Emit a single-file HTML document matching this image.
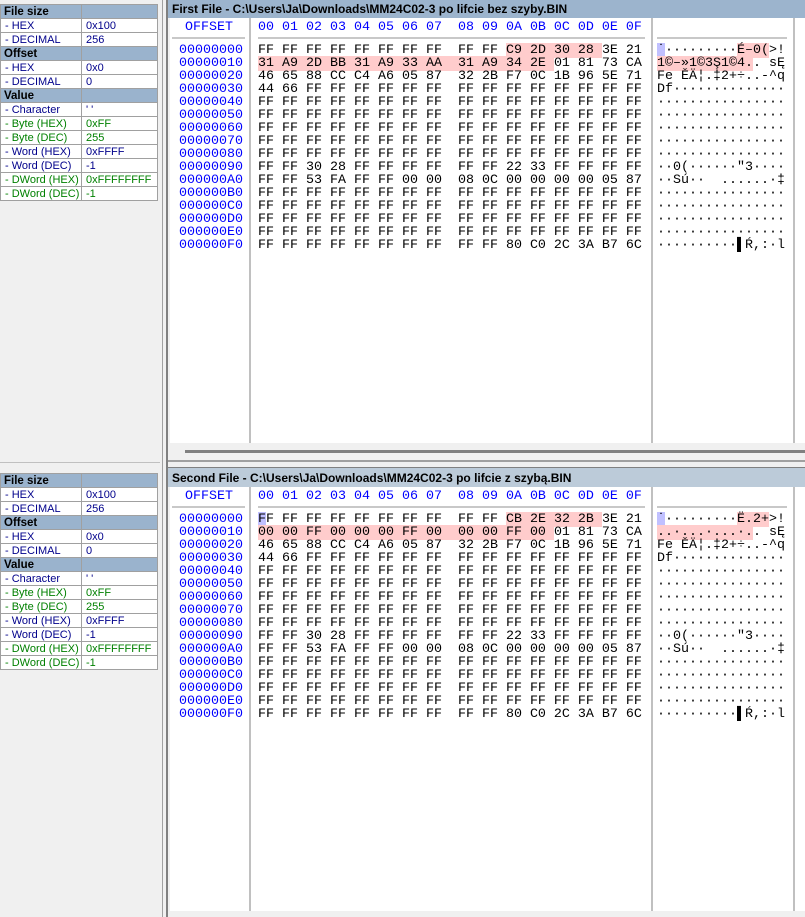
<!DOCTYPE html>
<html><head><meta charset="utf-8">
<style>
*{margin:0;padding:0;box-sizing:border-box}
body{width:805px;height:917px;background:#f0f0f0;position:relative;overflow:hidden;font-family:"Liberation Sans",sans-serif}
.abs{position:absolute}
table.p{position:absolute;left:0;width:158px;border-collapse:collapse;font-size:11px;background:#fff}
table.p td{height:14px;border:1px solid #a0a0a0;padding:0 0 0 4px;line-height:12px;white-space:nowrap}
table.p td:first-child{width:81px}
table.p tr.h td{background:#9ab3cd;font-weight:bold;color:#000;font-size:11.5px;padding-left:3px}
.n{color:#00008b}.g{color:#008000}
.title{position:absolute;left:168px;width:637px;height:18px;font-weight:bold;font-size:12px;line-height:18px;padding-left:4px;color:#000}
.view{position:absolute;left:170px;width:635px;background:#fff}
.mono{font-family:"Liberation Mono",monospace;font-size:13.33px;white-space:pre;line-height:13px;position:absolute}
.off{color:#0000ff;left:9px}
.hx{left:88px;color:#000}
.as{left:487px;color:#000}
.hd{color:#0000ff}
.pk{background:#ffcccc}
.bl{background:#c0c0ff}
.vl{position:absolute;width:2px;background:#c0c0c0}
.hl{position:absolute;height:2px;background:#c8c8c8}
</style></head><body>

<table class="p" style="top:4px">
<tr class="h"><td>File size</td><td></td></tr>
<tr><td class="n">- HEX</td><td class="n">0x100</td></tr>
<tr><td class="n">- DECIMAL</td><td class="n">256</td></tr>
<tr class="h"><td>Offset</td><td></td></tr>
<tr><td class="n">- HEX</td><td class="n">0x0</td></tr>
<tr><td class="n">- DECIMAL</td><td class="n">0</td></tr>
<tr class="h"><td>Value</td><td></td></tr>
<tr><td class="n">- Character</td><td class="n">' '</td></tr>
<tr><td class="g">- Byte (HEX)</td><td class="g">0xFF</td></tr>
<tr><td class="g">- Byte (DEC)</td><td class="g">255</td></tr>
<tr><td class="n">- Word (HEX)</td><td class="n">0xFFFF</td></tr>
<tr><td class="n">- Word (DEC)</td><td class="n">-1</td></tr>
<tr><td class="g">- DWord (HEX)</td><td class="g">0xFFFFFFFF</td></tr>
<tr><td class="g">- DWord (DEC)</td><td class="g">-1</td></tr>
</table>

<table class="p" style="top:473px">
<tr class="h"><td>File size</td><td></td></tr>
<tr><td class="n">- HEX</td><td class="n">0x100</td></tr>
<tr><td class="n">- DECIMAL</td><td class="n">256</td></tr>
<tr class="h"><td>Offset</td><td></td></tr>
<tr><td class="n">- HEX</td><td class="n">0x0</td></tr>
<tr><td class="n">- DECIMAL</td><td class="n">0</td></tr>
<tr class="h"><td>Value</td><td></td></tr>
<tr><td class="n">- Character</td><td class="n">' '</td></tr>
<tr><td class="g">- Byte (HEX)</td><td class="g">0xFF</td></tr>
<tr><td class="g">- Byte (DEC)</td><td class="g">255</td></tr>
<tr><td class="n">- Word (HEX)</td><td class="n">0xFFFF</td></tr>
<tr><td class="n">- Word (DEC)</td><td class="n">-1</td></tr>
<tr><td class="g">- DWord (HEX)</td><td class="g">0xFFFFFFFF</td></tr>
<tr><td class="g">- DWord (DEC)</td><td class="g">-1</td></tr>
</table>

<!-- splitters -->
<div class="abs" style="left:162px;top:0;width:1px;height:917px;background:#a0a0a0"></div>
<div class="abs" style="left:166px;top:0;width:2px;height:917px;background:#808080"></div>
<div class="abs" style="left:0;top:462px;width:160px;height:1px;background:#c0c0c0"></div>

<!-- top panel -->
<div class="title" style="top:0;background:#9cb4cd">First File - C:\Users\Ja\Downloads\MM24C02-3 po lifcie bez szyby.BIN</div>
<div class="view" style="top:18px;height:425px">
<div class="vl" style="left:79px;top:0;height:425px"></div>
<div class="vl" style="left:481px;top:0;height:425px"></div>
<div class="vl" style="left:623px;top:0;height:425px"></div>
<div class="hl" style="left:2px;top:19px;width:73px"></div>
<div class="hl" style="left:88px;top:19px;width:387px"></div>
<div class="hl" style="left:487px;top:19px;width:130px"></div>
<div class="mono hd" style="left:15px;top:3px">OFFSET</div>
<div class="mono hd hx" style="top:3px;color:#0000ff">00 01 02 03 04 05 06 07  08 09 0A 0B 0C 0D 0E 0F</div>
<div class="mono off" style="top:26px">00000000
00000010
00000020
00000030
00000040
00000050
00000060
00000070
00000080
00000090
000000A0
000000B0
000000C0
000000D0
000000E0
000000F0</div>
<div class="mono hx" style="top:26px">FF FF FF FF FF FF FF FF  FF FF <span class="pk">C9 2D 30 28 </span>3E 21
<span class="pk">31 A9 2D BB 31 A9 33 AA  31 A9 34 2E </span>01 81 73 CA
46 65 88 CC C4 A6 05 87  32 2B F7 0C 1B 96 5E 71
44 66 FF FF FF FF FF FF  FF FF FF FF FF FF FF FF
FF FF FF FF FF FF FF FF  FF FF FF FF FF FF FF FF
FF FF FF FF FF FF FF FF  FF FF FF FF FF FF FF FF
FF FF FF FF FF FF FF FF  FF FF FF FF FF FF FF FF
FF FF FF FF FF FF FF FF  FF FF FF FF FF FF FF FF
FF FF FF FF FF FF FF FF  FF FF FF FF FF FF FF FF
FF FF 30 28 FF FF FF FF  FF FF 22 33 FF FF FF FF
FF FF 53 FA FF FF 00 00  08 0C 00 00 00 00 05 87
FF FF FF FF FF FF FF FF  FF FF FF FF FF FF FF FF
FF FF FF FF FF FF FF FF  FF FF FF FF FF FF FF FF
FF FF FF FF FF FF FF FF  FF FF FF FF FF FF FF FF
FF FF FF FF FF FF FF FF  FF FF FF FF FF FF FF FF
FF FF FF FF FF FF FF FF  FF FF 80 C0 2C 3A B7 6C</div>
<div class="mono as" style="top:26px"><span class="bl">˙</span>·········<span class="pk">É–0(</span>&gt;!
<span class="pk">1©–»1©3Ş1©4.</span>. sĘ
Fe ĚÄ¦.‡2+÷..-^q
Df··············
················
················
················
················
················
··0(······"3····
··Sú··  ......·‡
················
················
················
················
··········▌Ŕ,:·l</div>
</div>
<div class="abs" style="left:185px;top:450px;width:620px;height:3px;background:#808080"></div>
<div class="abs" style="left:168px;top:460px;width:637px;height:2px;background:#a0a0a0"></div>

<!-- bottom panel -->
<div class="title" style="top:467px;height:20px;line-height:20px;background:#bccbd9;border-top:1px solid #808080">Second File - C:\Users\Ja\Downloads\MM24C02-3 po lifcie z szybą.BIN</div>
<div class="view" style="top:487px;height:424px">
<div class="vl" style="left:79px;top:0;height:424px"></div>
<div class="vl" style="left:481px;top:0;height:424px"></div>
<div class="vl" style="left:623px;top:0;height:424px"></div>
<div class="hl" style="left:2px;top:19px;width:73px"></div>
<div class="hl" style="left:88px;top:19px;width:387px"></div>
<div class="hl" style="left:487px;top:19px;width:130px"></div>
<div class="mono hd" style="left:15px;top:3px">OFFSET</div>
<div class="mono hd hx" style="top:3px;color:#0000ff">00 01 02 03 04 05 06 07  08 09 0A 0B 0C 0D 0E 0F</div>
<div class="mono off" style="top:26px">00000000
00000010
00000020
00000030
00000040
00000050
00000060
00000070
00000080
00000090
000000A0
000000B0
000000C0
000000D0
000000E0
000000F0</div>
<div class="mono hx" style="top:26px"><span class="bl">F</span>F FF FF FF FF FF FF FF  FF FF <span class="pk">CB 2E 32 2B </span>3E 21
<span class="pk">00 00 FF 00 00 00 FF 00  00 00 FF 00 </span>01 81 73 CA
46 65 88 CC C4 A6 05 87  32 2B F7 0C 1B 96 5E 71
44 66 FF FF FF FF FF FF  FF FF FF FF FF FF FF FF
FF FF FF FF FF FF FF FF  FF FF FF FF FF FF FF FF
FF FF FF FF FF FF FF FF  FF FF FF FF FF FF FF FF
FF FF FF FF FF FF FF FF  FF FF FF FF FF FF FF FF
FF FF FF FF FF FF FF FF  FF FF FF FF FF FF FF FF
FF FF FF FF FF FF FF FF  FF FF FF FF FF FF FF FF
FF FF 30 28 FF FF FF FF  FF FF 22 33 FF FF FF FF
FF FF 53 FA FF FF 00 00  08 0C 00 00 00 00 05 87
FF FF FF FF FF FF FF FF  FF FF FF FF FF FF FF FF
FF FF FF FF FF FF FF FF  FF FF FF FF FF FF FF FF
FF FF FF FF FF FF FF FF  FF FF FF FF FF FF FF FF
FF FF FF FF FF FF FF FF  FF FF FF FF FF FF FF FF
FF FF FF FF FF FF FF FF  FF FF 80 C0 2C 3A B7 6C</div>
<div class="mono as" style="top:26px"><span class="bl">˙</span>·········<span class="pk">Ë.2+</span>&gt;!
<span class="pk">..·...·...·.</span>. sĘ
Fe ĚÄ¦.‡2+÷..-^q
Df··············
················
················
················
················
················
··0(······"3····
··Sú··  ......·‡
················
················
················
················
··········▌Ŕ,:·l</div>
</div>
</body></html>
